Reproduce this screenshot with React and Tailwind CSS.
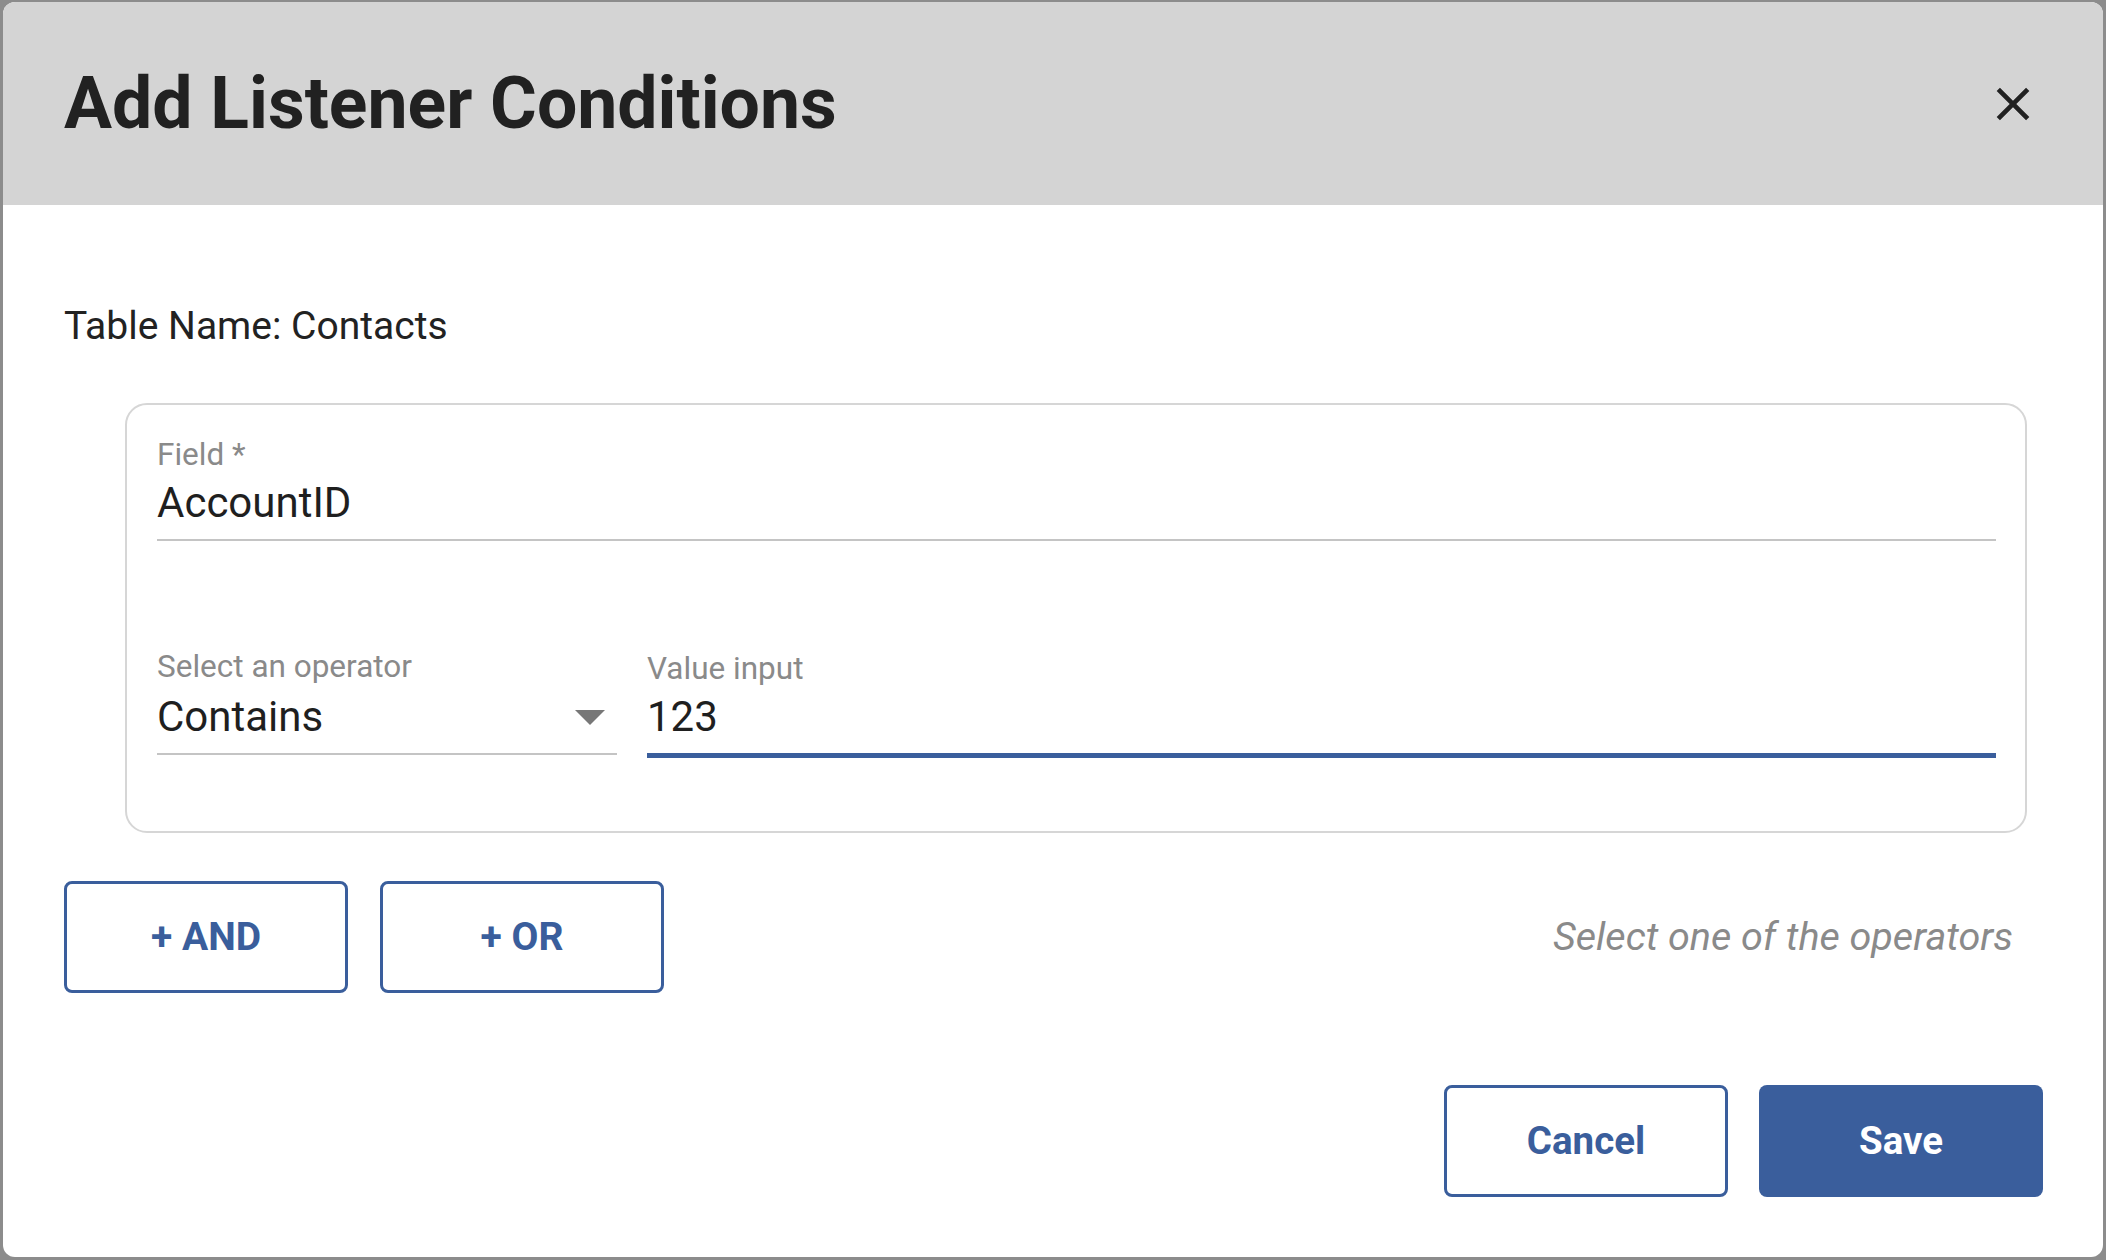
import React from "react";

const CloseIcon = () => (
  <svg viewBox="0 0 24 24" className="w-[56px] h-[56px]" fill="#212121">
    <path d="M19 6.41 17.59 5 12 10.59 6.41 5 5 6.41 10.59 12 5 17.59 6.41 19 12 13.41 17.59 19 19 17.59 13.41 12z" />
  </svg>
);

const App = () => {
  return (
    <div
      className="w-[2106px] h-[1260px] bg-[#8c8c8c] pt-[2px] pl-[3px] overflow-hidden"
      style={{ fontFamily: "Roboto, 'Liberation Sans', sans-serif" }}
    >
      <div className="w-[2100px] h-[1255px] bg-white rounded-[12px] overflow-hidden flex flex-col">
        {/* Header */}
        <div className="h-[203px] bg-[#d4d4d4] flex items-center justify-between pl-[61px] pr-[62px]">
          <h1 className="text-[71.5px] font-bold leading-none text-[#212121]">
            Add Listener Conditions
          </h1>
          <button className="flex items-center justify-center">
            <CloseIcon />
          </button>
        </div>

        {/* Body */}
        <div className="pl-[61px] pr-[60px]">
          <p className="mt-[97px] text-[39px] leading-[48px] text-[#222222]">
            Table Name: Contacts
          </p>

          {/* Condition card */}
          <div className="mt-[53px] ml-[61px] mr-[16px] border-2 border-[#d6d6d6] rounded-[22px] pt-[32px] pb-[73px] pl-[30px] pr-[29px]">
            <div className="border-b-2 border-[#c4c4c4] pb-[12px]">
              <div className="text-[31.5px] leading-[36px] text-[#8a8a8a]">Field *</div>
              <div className="mt-[6px] text-[42px] leading-[48px] text-[#1f1f1f]">AccountID</div>
            </div>

            <div className="mt-[108px] flex items-start gap-[30px]">
              <div className="w-[460px] border-b-2 border-[#c4c4c4] pb-[12px]">
                <div className="text-[31.5px] leading-[36px] text-[#8a8a8a]">Select an operator</div>
                <div className="mt-[8px] flex items-center justify-between">
                  <span className="text-[42px] leading-[48px] text-[#1f1f1f]">Contains</span>
                  <svg viewBox="0 0 30 15" className="w-[30px] h-[15px] mr-[12px]">
                    <path d="M0 0 L30 0 L15 15 Z" fill="#777777" />
                  </svg>
                </div>
              </div>
              <div className="flex-1 border-b-[5px] border-[#3a5e9c] pb-[12px]">
                <div className="mt-[2px] text-[31.5px] leading-[36px] text-[#8a8a8a]">Value input</div>
                <div className="mt-[6px] text-[42px] leading-[48px] text-[#1f1f1f]">123</div>
              </div>
            </div>
          </div>

          {/* AND / OR row */}
          <div className="mt-[48px] flex items-center justify-between">
            <div className="flex gap-[32px]">
              <button className="w-[284px] h-[112px] border-[3px] border-[#3a5e9c] rounded-[8px] text-[39px] font-bold text-[#3a5e9c]">
                + AND
              </button>
              <button className="w-[284px] h-[112px] border-[3px] border-[#3a5e9c] rounded-[8px] text-[39px] font-bold text-[#3a5e9c]">
                + OR
              </button>
            </div>
            <span className="mr-[30px] text-[39.5px] italic text-[#8a8a8a]">
              Select one of the operators
            </span>
          </div>

          {/* Footer */}
          <div className="mt-[92px] flex justify-end gap-[31px]">
            <button className="w-[284px] h-[112px] border-[3px] border-[#3a5e9c] rounded-[8px] text-[38.5px] font-bold text-[#3a5e9c]">
              Cancel
            </button>
            <button className="w-[284px] h-[112px] bg-[#3a5e9c] rounded-[8px] text-[38.5px] font-bold text-white">
              Save
            </button>
          </div>
        </div>
      </div>
    </div>
  );
};

export default App;
